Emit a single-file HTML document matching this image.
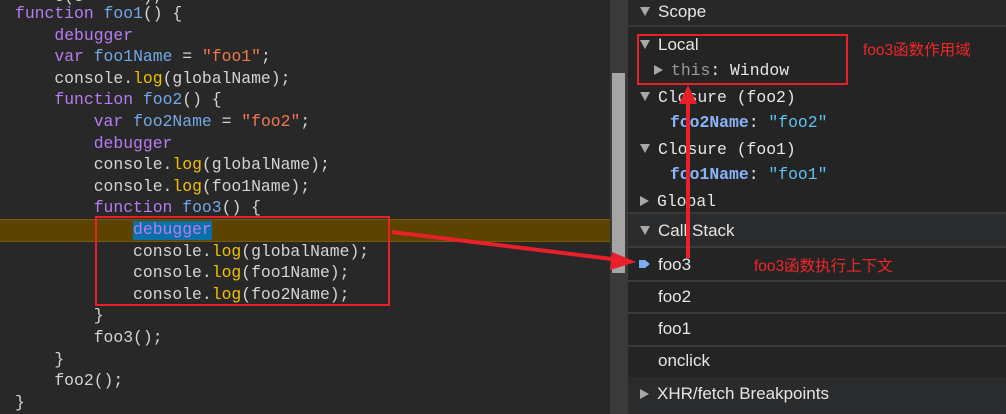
<!DOCTYPE html>
<html><head><meta charset="utf-8"><style>
body{margin:0;width:1006px;height:414px;overflow:hidden;background:#282828;position:relative;font-family:"Liberation Sans",sans-serif}
.code{position:absolute;left:0;top:0;width:610px;height:414px;background:#282828;font-family:"Liberation Mono",monospace;font-size:16.4px;color:#d4d4d4}
.ln{position:absolute;left:15px;white-space:pre;line-height:20px}
.k{color:#b77cf2}.f{color:#72a8e8}.s{color:#f2784b}.y{color:#f0c000}
.hl{position:absolute;left:0;top:219px;width:610px;height:23px;background:#5c4300;border-top:1px solid #7a5a00;border-bottom:1px solid #7a5a00;box-sizing:border-box}
.sb{position:absolute;left:610px;top:0;width:18px;height:414px;background:#3a3a3a}
.th{position:absolute;left:612px;top:73px;width:13px;height:200px;background:#a5a5a5}
.rp{position:absolute;left:628px;top:0;width:378px;height:414px;background:#242424;color:#e6e6e6;font-size:17px}
.r{position:absolute;white-space:pre}
.m{font-family:"Liberation Mono",monospace;font-size:16.4px}
.tri{display:inline-block;width:0;height:0;border-left:5px solid transparent;border-right:5px solid transparent;border-top:9px solid #a8a8a8;margin-right:8px;vertical-align:1px}
.tr{display:inline-block;width:0;height:0;border-top:5px solid transparent;border-bottom:5px solid transparent;border-left:9px solid #a8a8a8;margin-right:8px;vertical-align:0}
.sep{position:absolute;left:0;width:378px;height:2px;background:#3a3a3a}
.red{color:#f0262a;font-family:"Liberation Sans","Noto Sans CJK SC",sans-serif;font-size:15.5px;position:absolute}
</style></head><body>
<div class="code">
<div class="hl"></div>
<div style="position:absolute;left:133px;top:221px;width:79px;height:19px;background:#0a70a8"></div>
<div class="ln" style="top:-13px">    c(s      );</div>
<div class="ln" style="top:4px"><span class="k">function</span> <span class="f">foo1</span>() {</div>
<div class="ln" style="top:26px">    <span class="k">debugger</span></div>
<div class="ln" style="top:47px">    <span class="k">var</span> <span class="f">foo1Name</span> = <span class="s">"foo1"</span>;</div>
<div class="ln" style="top:69px">    console.<span class="y">log</span>(globalName);</div>
<div class="ln" style="top:90px">    <span class="k">function</span> <span class="f">foo2</span>() {</div>
<div class="ln" style="top:112px">        <span class="k">var</span> <span class="f">foo2Name</span> = <span class="s">"foo2"</span>;</div>
<div class="ln" style="top:134px">        <span class="k">debugger</span></div>
<div class="ln" style="top:155px">        console.<span class="y">log</span>(globalName);</div>
<div class="ln" style="top:177px">        console.<span class="y">log</span>(foo1Name);</div>
<div class="ln" style="top:198px">        <span class="k">function</span> <span class="f">foo3</span>() {</div>
<div class="ln" style="top:220px">            <span class="k">debugger</span></div>
<div class="ln" style="top:242px">            console.<span class="y">log</span>(globalName);</div>
<div class="ln" style="top:263px">            console.<span class="y">log</span>(foo1Name);</div>
<div class="ln" style="top:285px">            console.<span class="y">log</span>(foo2Name);</div>
<div class="ln" style="top:306px">        }</div>
<div class="ln" style="top:328px">        foo3();</div>
<div class="ln" style="top:350px">    }</div>
<div class="ln" style="top:371px">    foo2();</div>
<div class="ln" style="top:393px">}</div>
</div>
<div class="sb"></div><div class="th"></div>
<div class="rp">
<div style="position:absolute;left:0;top:0;width:378px;height:25px;background:#282828"></div>
<div class="sep" style="top:25px"></div>
<div class="r" style="left:12px;top:2px"><span class="tri"></span>Scope</div>
<div class="r" style="left:12px;top:35px"><span class="tri"></span>Local</div>
<div class="r m" style="left:26px;top:61px"><span class="tr"></span><span style="color:#9a9a9a">this</span>: Window</div>
<div class="r" style="left:12px;top:87px"><span class="tri"></span><span class="m">Closure (foo2)</span></div>
<div class="r m" style="left:42px;top:113px"><b style="color:#8ab4f8">foo2Name</b>: <span style="color:#5cc4f0">"foo2"</span></div>
<div class="r" style="left:12px;top:139px"><span class="tri"></span><span class="m">Closure (foo1)</span></div>
<div class="r m" style="left:42px;top:165px"><b style="color:#8ab4f8">foo1Name</b>: <span style="color:#5cc4f0">"foo1"</span></div>
<div class="r" style="left:12px;top:191px"><span class="tr"></span><span class="m">Global</span></div>
<div style="position:absolute;left:0;top:214px;width:378px;height:32px;background:#2a2b2d"></div>
<div class="sep" style="top:212px"></div><div class="sep" style="top:246px"></div>
<div class="r" style="left:12px;top:221px"><span class="tri"></span>Call Stack</div>
<svg style="position:absolute;left:10px;top:257px" width="14" height="14"><path d="M1 3h6l5 4-5 4H1z" fill="#7cacf8"/></svg>
<div class="r" style="left:30px;top:255px">foo3</div>
<div class="sep" style="top:280px"></div>
<div class="r" style="left:30px;top:287px">foo2</div>
<div class="sep" style="top:312px"></div>
<div class="r" style="left:30px;top:319px">foo1</div>
<div class="sep" style="top:345px"></div>
<div class="r" style="left:30px;top:351px">onclick</div>
<div style="position:absolute;left:0;top:377px;width:378px;height:37px;background:#2a2b2d"></div>
<div class="r" style="left:12px;top:384px"><span class="tr"></span>XHR/fetch Breakpoints</div>
</div>
<div style="position:absolute;left:95px;top:216px;width:295px;height:90px;border:2px solid #e8202a;box-sizing:border-box"></div>
<div style="position:absolute;left:637px;top:34px;width:211px;height:51px;border:2px solid #e8202a;box-sizing:border-box"></div>
<svg style="position:absolute;left:0;top:0" width="1006" height="414">
<line x1="392" y1="232" x2="620" y2="260" stroke="#e8202a" stroke-width="4"/>
<polygon points="636,262 612,252 610,270" fill="#e8202a"/>
<line x1="688" y1="258" x2="688" y2="100" stroke="#e8202a" stroke-width="4"/>
<polygon points="688,85 679,104 697,104" fill="#e8202a"/>
</svg>
<div class="red" style="left:863px;top:38px">foo3函数作用域</div>
<div class="red" style="left:754px;top:254px">foo3函数执行上下文</div>
</body></html>
